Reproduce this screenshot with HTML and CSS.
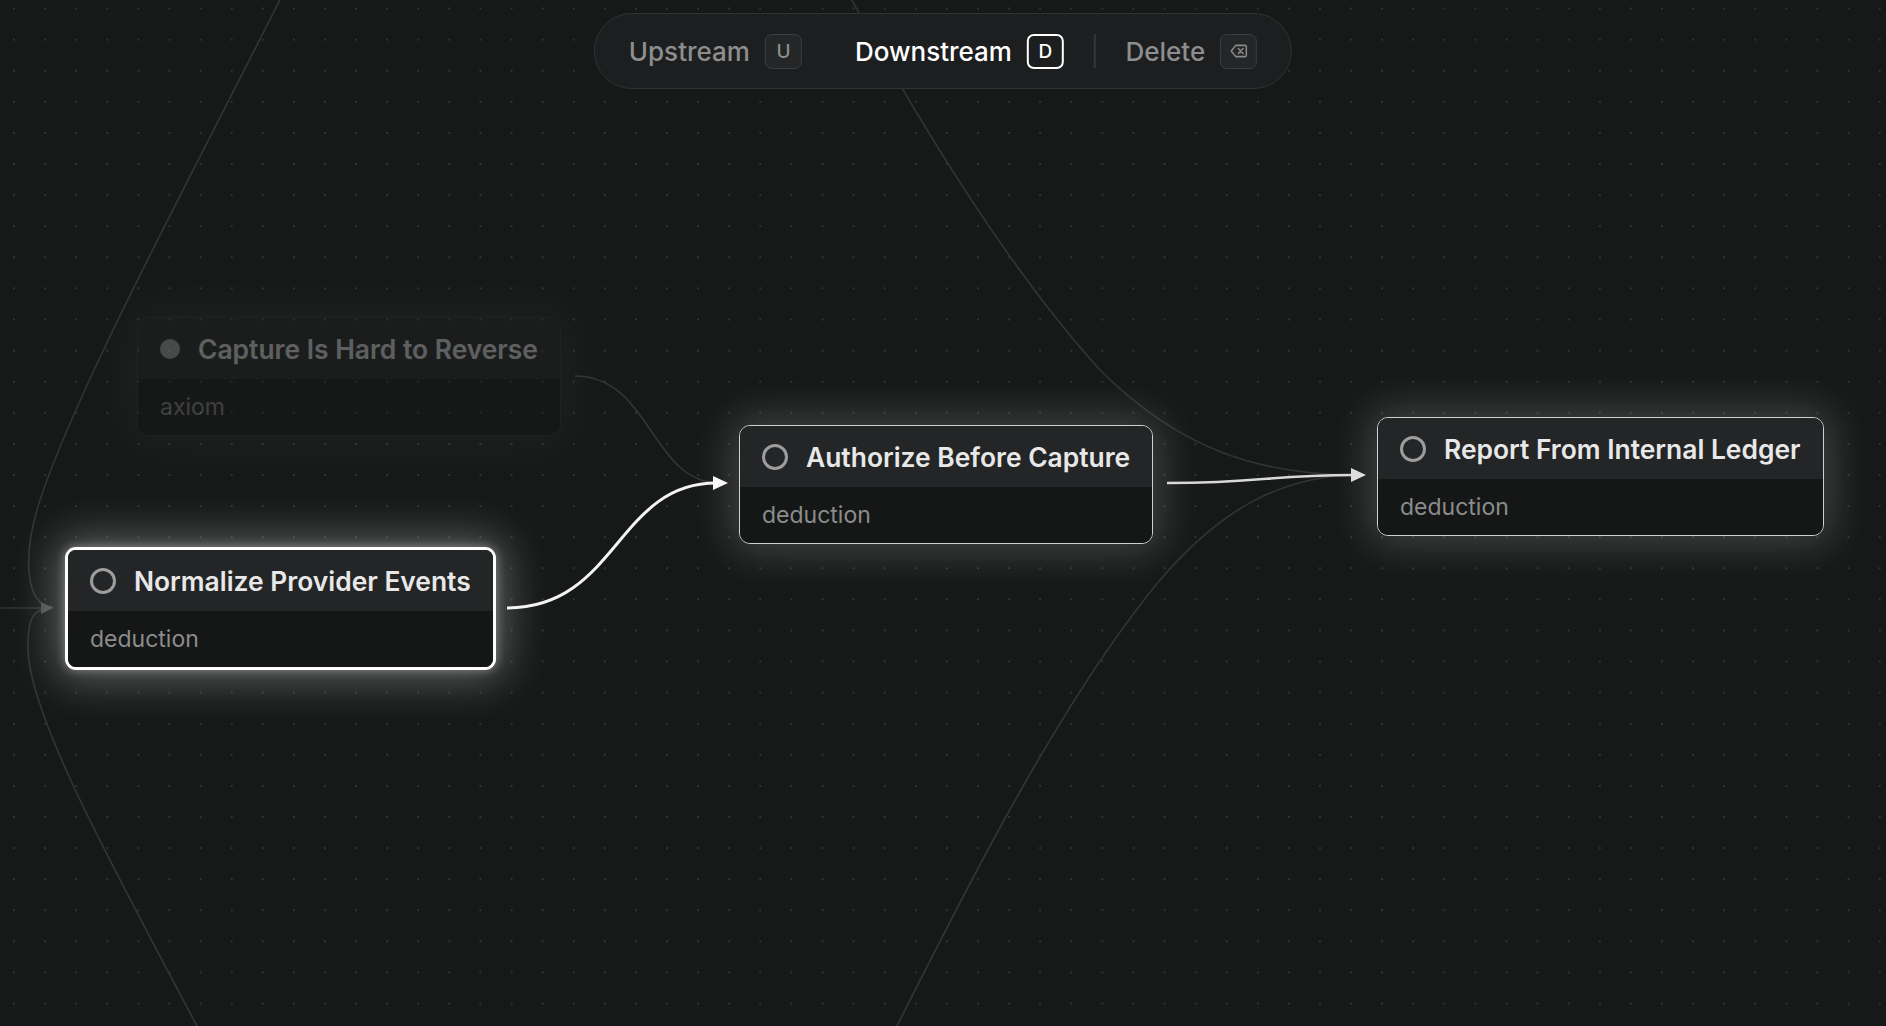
FILE: index.html
```html
<!DOCTYPE html>
<html lang="en">
<head>
<meta charset="utf-8">
<title>Graph</title>
<link rel="stylesheet" href="styles.css">
</head>
<body>
<main class="canvas">
  <svg class="edges" width="1886" height="1026" viewBox="0 0 1886 1026" xmlns="http://www.w3.org/2000/svg">
    <!-- faint edges from nodes outside the viewport -->
    <g class="edge-faint">
      <path d="M 300 -40 C 200 160 80 380 40 500 C 22 555 25 607 53 607"/>
      <path d="M -10 608 L 46 608"/>
      <path d="M 215 1060 C 120 880 30 720 28 650 C 27 615 35 608 53 608"/>
      <path d="M 575 376 C 651 376 651 483 720 483"/>
      <path d="M 830 -40 C 900 90 1000 260 1100 370 C 1180 450 1260 475 1358 475"/>
      <path d="M 885 1050 C 960 900 1060 700 1160 580 C 1220 510 1280 476 1358 475"/>
    </g>
    <polygon class="arrow-faint" points="53,608 41,602 41,614"/>
    <!-- active edges -->
    <path class="edge-selected" d="M 507 608 C 617 608 617 483 716 483"/>
    <polygon class="arrow-selected" points="728,483 713,476 713,490"/>
    <path class="edge-active" d="M 1167 483 C 1266 483 1266 475 1354 475"/>
    <polygon class="arrow-active" points="1366,475 1351,468 1351,482"/>
  </svg>

  <div class="node node--dim node-capture">
    <div class="node-head">
      <span class="status status--filled"></span>
      <span class="node-title">Capture Is Hard to Reverse</span>
    </div>
    <div class="node-body">axiom</div>
  </div>

  <div class="node node--selected node-normalize">
    <div class="node-head">
      <span class="status"></span>
      <span class="node-title">Normalize Provider Events</span>
    </div>
    <div class="node-body">deduction</div>
  </div>

  <div class="node node--lit node-authorize">
    <div class="node-head">
      <span class="status"></span>
      <span class="node-title">Authorize Before Capture</span>
    </div>
    <div class="node-body">deduction</div>
  </div>

  <div class="node node--lit node-report">
    <div class="node-head">
      <span class="status"></span>
      <span class="node-title">Report From Internal Ledger</span>
    </div>
    <div class="node-body">deduction</div>
  </div>

  <nav class="toolbar">
    <button class="tb-btn">Upstream <kbd class="key">U</kbd></button>
    <button class="tb-btn tb-btn--on">Downstream <kbd class="key key--on">D</kbd></button>
    <span class="tb-sep"></span>
    <button class="tb-btn">Delete
      <kbd class="key">
        <svg class="key-icon" viewBox="0 0 16 16" width="18" height="18" fill="none" stroke="currentColor" stroke-width="1.4" stroke-linejoin="round" stroke-linecap="round">
          <path d="M5.3 3 H13.5 a1.2 1.2 0 0 1 1.2 1.2 V11.8 a1.2 1.2 0 0 1 -1.2 1.2 H5.3 L1.3 8 Z"/>
          <path d="M7.6 5.8 L11.8 10.2 M11.8 5.8 L7.6 10.2"/>
        </svg>
      </kbd>
    </button>
  </nav>
</main>
</body>
</html>
```

FILE: styles.css
```css
html, body {
  margin: 0;
  padding: 0;
  background: #171919;
}

body {
  width: 1886px;
  height: 1026px;
  overflow: hidden;
  font-family: Inter, "Noto Sans", "Liberation Sans", sans-serif;
}

/* canvas with a dotted grid */
.canvas {
  position: relative;
  width: 1886px;
  height: 1026px;
  overflow: hidden;
  background-color: #171919;
  background-image: radial-gradient(circle at center, #323434 0, #323434 0.9px, transparent 1.3px);
  background-size: 31.1px 31.1px;
  background-position: -1.5px -7px;
}

.edges {
  position: absolute;
  left: 0;
  top: 0;
}

.edge-faint path {
  fill: none;
  stroke: #333535;
  stroke-width: 1.6;
}

.arrow-faint { fill: #4a4c4c; }

.edge-selected {
  fill: none;
  stroke: #f4f4f4;
  stroke-width: 3;
}
.arrow-selected { fill: #f8f8f8; }

.edge-active {
  fill: none;
  stroke: #d8d8d8;
  stroke-width: 2.6;
}
.arrow-active { fill: #dcdcdc; }

/* nodes */
.node {
  position: absolute;
  display: flex;
  flex-direction: column;
  border: 1px solid #353738;
  border-radius: 11px;
  overflow: hidden;
  background: #151717;
}

.node-head {
  display: flex;
  align-items: center;
  gap: 18px;
  height: 61px;
  padding: 0 22px;
  background: #232527;
}

.node-title {
  font-size: 26.4px;
  font-weight: 600;
  color: #e8e8e8;
  white-space: nowrap;
}

.status {
  box-sizing: border-box;
  width: 26px;
  height: 26px;
  flex: none;
  border-radius: 50%;
  border: 3.5px solid #9d9d9d;
}

.status--filled {
  width: 20px;
  height: 20px;
  border: none;
  background: #a8a8a8;
}

.node-body {
  display: flex;
  align-items: center;
  height: 56px;
  padding: 0 22px;
  font-size: 23px;
  color: #8c8c8c;
  background: #151717;
}

.node--dim {
  opacity: 0.34;
  box-shadow: 0 0 50px 6px rgba(255, 255, 255, 0.12);
}

.node--selected {
  border: 3px solid #ffffff;
  box-shadow: 0 0 44px 10px rgba(255, 255, 255, 0.3), 0 0 10px 1px rgba(255, 255, 255, 0.3);
}

.node--lit {
  border: 1.5px solid #cfcfcf;
  box-shadow: 0 0 42px 8px rgba(255, 255, 255, 0.19);
}

.node-capture   { left: 137px;  top: 317px; }
.node-normalize { left: 65px;   top: 547px; }
.node-authorize { left: 739px;  top: 425px; }
.node-report    { left: 1377px; top: 417px; }

/* floating toolbar */
.toolbar {
  position: absolute;
  top: 13px;
  left: 50%;
  transform: translateX(-50%);
  display: flex;
  align-items: center;
  gap: 29px;
  height: 76px;
  box-sizing: border-box;
  padding: 0 22px;
  border: 1.5px solid #303233;
  border-radius: 38px;
  background: #1c1e1f;
}

.tb-btn {
  display: flex;
  align-items: center;
  gap: 15px;
  padding: 0 12px;
  border: none;
  background: none;
  font-family: inherit;
  font-size: 26px;
  font-weight: 500;
  color: #8e8e8e;
  white-space: nowrap;
}

.tb-btn--on { color: #ffffff; }

.tb-sep {
  width: 1.5px;
  height: 34px;
  margin: 0 -11px;
  background: #34373a;
}

.key {
  box-sizing: border-box;
  display: flex;
  align-items: center;
  justify-content: center;
  width: 37px;
  height: 35px;
  border: 1.5px solid #3b3d3e;
  border-radius: 7px;
  background: #242627;
  font-family: inherit;
  font-size: 19px;
  font-weight: 500;
  color: #8e8e8e;
}

.key--on {
  border: 2px solid #ffffff;
  background: #1c1e1f;
  color: #ffffff;
}

.key-icon { display: block; color: #8a8a8a; }
```
